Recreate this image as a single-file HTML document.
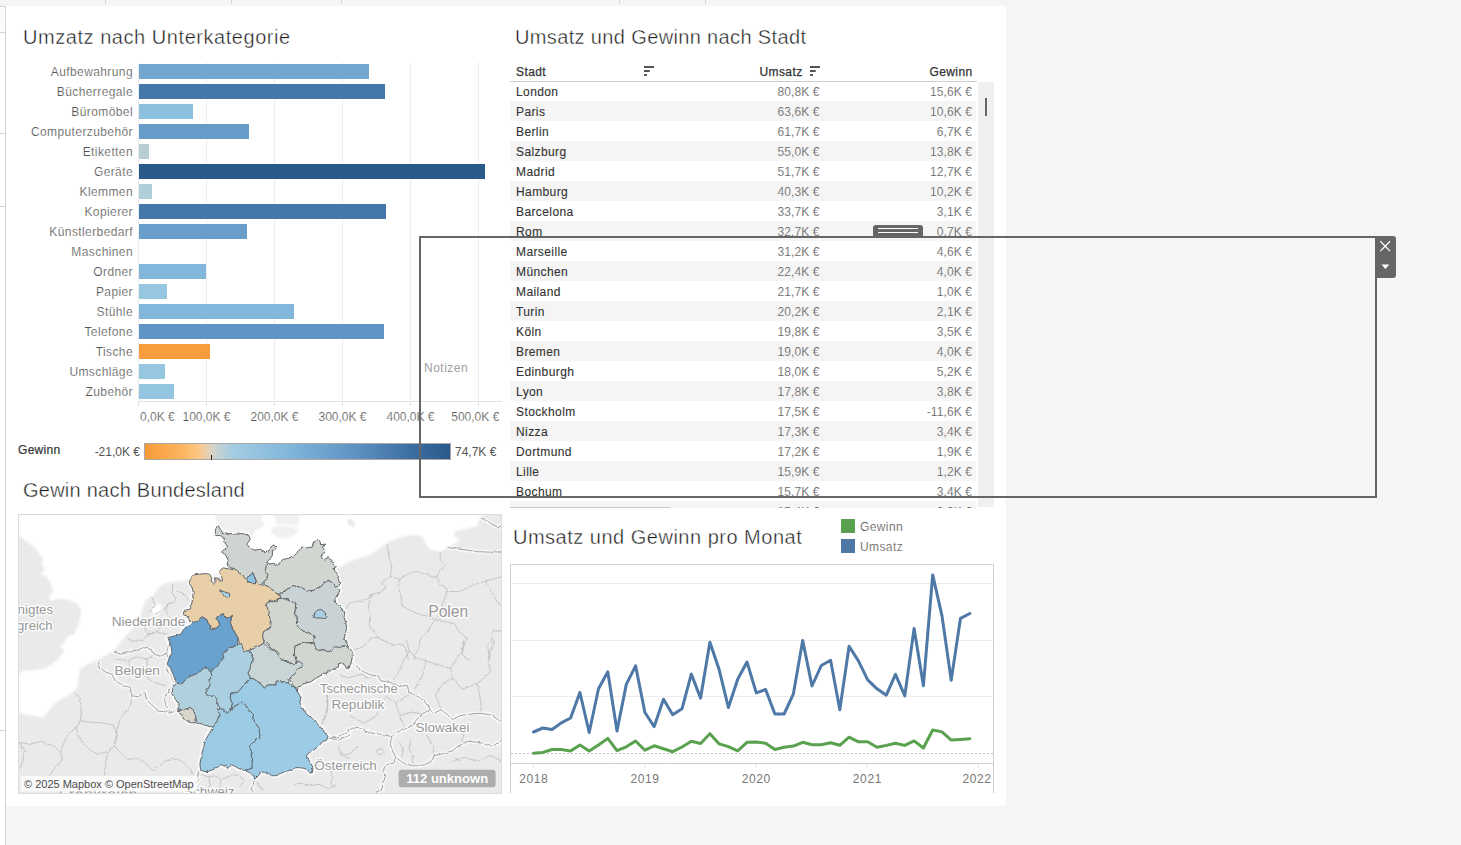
<!DOCTYPE html>
<html lang="de"><head><meta charset="utf-8"><title>Dashboard</title>
<style>
html,body{margin:0;padding:0;}
body{width:1461px;height:845px;overflow:hidden;background:#f5f5f5;position:relative;font-family:"Liberation Sans",Arial,sans-serif;}
.abs{position:absolute;}
#dash{position:absolute;left:6px;top:6px;width:1000px;height:800px;background:#fff;}
.title{position:absolute;font-size:20px;color:#1c1c1c;-webkit-text-stroke:0.4px #fff;white-space:nowrap;line-height:24px;letter-spacing:0.55px;}
.blab{position:absolute;left:0;width:133px;text-align:right;font-size:12px;color:#555;-webkit-text-stroke:0.18px #fff;line-height:20px;height:20px;white-space:nowrap;letter-spacing:0.4px;}
.bar{position:absolute;left:139px;height:15px;}
.grid{position:absolute;width:1px;background:#ededed;top:62px;height:339px;}
.axl{position:absolute;font-size:12px;color:#585858;-webkit-text-stroke:0.18px #fff;line-height:14px;top:410px;white-space:nowrap;}
.row{position:absolute;left:510px;width:466px;height:20px;}
.row.g{background:#f5f5f5;}
.c1{position:absolute;left:516px;font-size:12px;color:#333;line-height:20px;white-space:nowrap;letter-spacing:0.4px;-webkit-text-stroke:0.12px #333;}
.c2,.c3{position:absolute;font-size:12px;color:#505050;-webkit-text-stroke:0.22px #fafafa;line-height:20px;white-space:nowrap;text-align:right;width:80px;letter-spacing:0.1px;}
.c2{left:739.5px;}
.c3{left:892px;}
.hd{position:absolute;font-size:12px;color:#333;line-height:20px;white-space:nowrap;letter-spacing:0.4px;-webkit-text-stroke:0.25px #333;}
</style></head><body>

<div class="abs" style="left:0;top:7px;width:5px;height:838px;background:#fff"></div>
<div class="abs" style="left:0;top:8px;width:4px;height:23px;background:#fafafa"></div>
<div class="abs" style="left:5px;top:6px;width:1px;height:839px;background:#d4d4d4"></div>
<div class="abs" style="left:0;top:6px;width:5px;height:1px;background:#d4d4d4"></div>
<div class="abs" style="left:0;top:32px;width:5px;height:1px;background:#d4d4d4"></div>
<div class="abs" style="left:0;top:133px;width:5px;height:1px;background:#d4d4d4"></div>
<div class="abs" style="left:0;top:206px;width:5px;height:1px;background:#d4d4d4"></div>
<div class="abs" style="left:0;top:730px;width:5px;height:1px;background:#d4d4d4"></div>
<div class="abs" style="left:105px;top:0;width:1px;height:4px;background:#d4d4d4"></div>
<div class="abs" style="left:231px;top:0;width:1px;height:4px;background:#d4d4d4"></div>
<div class="abs" style="left:341px;top:0;width:1px;height:4px;background:#d4d4d4"></div>
<div class="abs" style="left:619px;top:0;width:1px;height:4px;background:#d4d4d4"></div>
<div class="abs" style="left:705px;top:0;width:1px;height:4px;background:#d4d4d4"></div>
<div id="dash"></div>
<div class="title" style="left:23px;top:25px;">Umzatz nach Unterkategorie</div>
<div class="grid" style="left:138px"></div>
<div class="grid" style="left:206px"></div>
<div class="grid" style="left:274px"></div>
<div class="grid" style="left:342px"></div>
<div class="grid" style="left:410px"></div>
<div class="grid" style="left:478px"></div>
<div class="blab" style="top:62px">Aufbewahrung</div>
<div class="bar" style="top:64px;width:230px;background:#72a6ce"></div>
<div class="blab" style="top:82px">Bücherregale</div>
<div class="bar" style="top:84px;width:246px;background:#4577a8"></div>
<div class="blab" style="top:102px">Büromöbel</div>
<div class="bar" style="top:104px;width:54px;background:#8dbfdf"></div>
<div class="blab" style="top:122px">Computerzubehör</div>
<div class="bar" style="top:124px;width:110px;background:#689cc8"></div>
<div class="blab" style="top:142px">Etiketten</div>
<div class="bar" style="top:144px;width:10px;background:#b9ced3"></div>
<div class="blab" style="top:162px">Geräte</div>
<div class="bar" style="top:164px;width:346px;background:#2a5a8a"></div>
<div class="blab" style="top:182px">Klemmen</div>
<div class="bar" style="top:184px;width:13px;background:#b0ced7"></div>
<div class="blab" style="top:202px">Kopierer</div>
<div class="bar" style="top:204px;width:247px;background:#4578a8"></div>
<div class="blab" style="top:222px">Künstlerbedarf</div>
<div class="bar" style="top:224px;width:108px;background:#6a9eca"></div>
<div class="blab" style="top:242px">Maschinen</div>
<div class="blab" style="top:262px">Ordner</div>
<div class="bar" style="top:264px;width:67px;background:#82b6da"></div>
<div class="blab" style="top:282px">Papier</div>
<div class="bar" style="top:284px;width:28px;background:#97c6e1"></div>
<div class="blab" style="top:302px">Stühle</div>
<div class="bar" style="top:304px;width:155px;background:#82b6da"></div>
<div class="blab" style="top:322px">Telefone</div>
<div class="bar" style="top:324px;width:245px;background:#6094c4"></div>
<div class="blab" style="top:342px">Tische</div>
<div class="bar" style="top:344px;width:71px;background:#f89c3c"></div>
<div class="blab" style="top:362px">Umschläge</div>
<div class="bar" style="top:364px;width:26px;background:#97c6e1"></div>
<div class="blab" style="top:382px">Zubehör</div>
<div class="bar" style="top:384px;width:35px;background:#93c4e0"></div>
<div class="abs" style="left:138px;top:401px;width:364px;height:1px;background:#e3e3e3"></div>
<div class="abs" style="left:138px;top:401px;width:1px;height:5px;background:#e3e3e3"></div>
<div class="abs" style="left:206px;top:401px;width:1px;height:5px;background:#e3e3e3"></div>
<div class="abs" style="left:274px;top:401px;width:1px;height:5px;background:#e3e3e3"></div>
<div class="abs" style="left:342px;top:401px;width:1px;height:5px;background:#e3e3e3"></div>
<div class="abs" style="left:410px;top:401px;width:1px;height:5px;background:#e3e3e3"></div>
<div class="abs" style="left:478px;top:401px;width:1px;height:5px;background:#e3e3e3"></div>
<div class="axl" style="left:140px">0,0K €</div>
<div class="axl" style="left:166.5px;width:80px;text-align:center">100,0K €</div>
<div class="axl" style="left:234.5px;width:80px;text-align:center">200,0K €</div>
<div class="axl" style="left:302.5px;width:80px;text-align:center">300,0K €</div>
<div class="axl" style="left:370.5px;width:80px;text-align:center">400,0K €</div>
<div class="axl" style="left:435.3px;width:80px;text-align:center">500,0K €</div>
<div class="abs" style="left:18px;top:442px;font-size:12px;line-height:16px;color:#333;letter-spacing:0.3px;-webkit-text-stroke:0.2px #333">Gewinn</div>
<div class="abs" style="left:60px;top:444px;width:80px;text-align:right;font-size:12px;line-height:16px;color:#555;white-space:nowrap">-21,0K €</div>
<div class="abs" style="left:455px;top:444px;font-size:12px;line-height:16px;color:#555;white-space:nowrap">74,7K €</div>
<div class="abs" style="left:144px;top:443px;width:305px;height:15px;border:1px solid #a8a8a8;background:linear-gradient(to right,#f89a38 0%,#fbb55f 12%,#fdc57f 17%,#e3d1b8 21%,#c4d2d4 24%,#a3cce3 29%,#86b9dc 45%,#6497c6 66%,#3f70a2 86%,#2a5a8a 100%)"></div>
<div class="abs" style="left:211px;top:455px;width:1px;height:5px;background:#222"></div>
<div class="title" style="left:515px;top:25px;letter-spacing:0.36px">Umsatz und Gewinn nach Stadt</div>
<div class="abs" style="left:0;top:0;width:1006px;height:508px;overflow:hidden">
<div class="c1" style="top:82px">London</div><div class="c2" style="top:82px">80,8K €</div><div class="c3" style="top:82px">15,6K €</div>
<div class="row g" style="top:101px"></div>
<div class="c1" style="top:102px">Paris</div><div class="c2" style="top:102px">63,6K €</div><div class="c3" style="top:102px">10,6K €</div>
<div class="c1" style="top:122px">Berlin</div><div class="c2" style="top:122px">61,7K €</div><div class="c3" style="top:122px">6,7K €</div>
<div class="row g" style="top:141px"></div>
<div class="c1" style="top:142px">Salzburg</div><div class="c2" style="top:142px">55,0K €</div><div class="c3" style="top:142px">13,8K €</div>
<div class="c1" style="top:162px">Madrid</div><div class="c2" style="top:162px">51,7K €</div><div class="c3" style="top:162px">12,7K €</div>
<div class="row g" style="top:181px"></div>
<div class="c1" style="top:182px">Hamburg</div><div class="c2" style="top:182px">40,3K €</div><div class="c3" style="top:182px">10,2K €</div>
<div class="c1" style="top:202px">Barcelona</div><div class="c2" style="top:202px">33,7K €</div><div class="c3" style="top:202px">3,1K €</div>
<div class="row g" style="top:221px"></div>
<div class="c1" style="top:222px">Rom</div><div class="c2" style="top:222px">32,7K €</div><div class="c3" style="top:222px">0,7K €</div>
<div class="c1" style="top:242px">Marseille</div><div class="c2" style="top:242px">31,2K €</div><div class="c3" style="top:242px">4,6K €</div>
<div class="row g" style="top:261px"></div>
<div class="c1" style="top:262px">München</div><div class="c2" style="top:262px">22,4K €</div><div class="c3" style="top:262px">4,0K €</div>
<div class="c1" style="top:282px">Mailand</div><div class="c2" style="top:282px">21,7K €</div><div class="c3" style="top:282px">1,0K €</div>
<div class="row g" style="top:301px"></div>
<div class="c1" style="top:302px">Turin</div><div class="c2" style="top:302px">20,2K €</div><div class="c3" style="top:302px">2,1K €</div>
<div class="c1" style="top:322px">Köln</div><div class="c2" style="top:322px">19,8K €</div><div class="c3" style="top:322px">3,5K €</div>
<div class="row g" style="top:341px"></div>
<div class="c1" style="top:342px">Bremen</div><div class="c2" style="top:342px">19,0K €</div><div class="c3" style="top:342px">4,0K €</div>
<div class="c1" style="top:362px">Edinburgh</div><div class="c2" style="top:362px">18,0K €</div><div class="c3" style="top:362px">5,2K €</div>
<div class="row g" style="top:381px"></div>
<div class="c1" style="top:382px">Lyon</div><div class="c2" style="top:382px">17,8K €</div><div class="c3" style="top:382px">3,8K €</div>
<div class="c1" style="top:402px">Stockholm</div><div class="c2" style="top:402px">17,5K €</div><div class="c3" style="top:402px">-11,6K €</div>
<div class="row g" style="top:421px"></div>
<div class="c1" style="top:422px">Nizza</div><div class="c2" style="top:422px">17,3K €</div><div class="c3" style="top:422px">3,4K €</div>
<div class="c1" style="top:442px">Dortmund</div><div class="c2" style="top:442px">17,2K €</div><div class="c3" style="top:442px">1,9K €</div>
<div class="row g" style="top:461px"></div>
<div class="c1" style="top:462px">Lille</div><div class="c2" style="top:462px">15,9K €</div><div class="c3" style="top:462px">1,2K €</div>
<div class="c1" style="top:482px">Bochum</div><div class="c2" style="top:482px">15,7K €</div><div class="c3" style="top:482px">3,4K €</div>
<div class="row g" style="top:501px"></div>
<div class="c1" style="top:502px">Helsinki</div><div class="c2" style="top:502px">15,4K €</div><div class="c3" style="top:502px">2,3K €</div>
</div>
<div class="hd" style="left:516px;top:62px">Stadt</div>
<div class="hd" style="left:759.5px;top:62px">Umsatz</div>
<div class="hd" style="left:929.5px;top:62px">Gewinn</div>
<div class="abs" style="left:510px;top:81px;width:467px;height:1px;background:#cfcfcf"></div>
<svg class="abs" style="left:643.5px;top:66px" width="10.5" height="10" viewBox="0 0 11 10" preserveAspectRatio="none"><rect x="0" y="0" width="11" height="2" fill="#555"/><rect x="0" y="4" width="6" height="2" fill="#555"/><rect x="0" y="8" width="3" height="2" fill="#555"/></svg>
<svg class="abs" style="left:809.5px;top:66px" width="10.5" height="10" viewBox="0 0 11 10" preserveAspectRatio="none"><rect x="0" y="0" width="11" height="2" fill="#555"/><rect x="0" y="4" width="6" height="2" fill="#555"/><rect x="0" y="8" width="3" height="2" fill="#555"/></svg>
<div class="abs" style="left:978px;top:82px;width:16px;height:425px;background:#f0f0f0"></div>
<div class="abs" style="left:985px;top:98px;width:2px;height:18px;background:#666"></div>
<div class="abs" style="left:510px;top:507px;width:160px;height:1px;background:#c9c9c9"></div>
<div class="title" style="left:23px;top:478px;letter-spacing:0.24px">Gewin nach Bundesland</div>
<svg class="abs" style="left:18px;top:514px" width="484" height="280" viewBox="18 514 484 280">
<defs><filter id="soft" x="-5%" y="-5%" width="110%" height="110%"><feGaussianBlur stdDeviation="1.2"/></filter><filter id="jag" x="-2%" y="-2%" width="104%" height="104%"><feTurbulence type="fractalNoise" baseFrequency="0.22" numOctaves="2" seed="7" result="n"/><feDisplacementMap in="SourceGraphic" in2="n" scale="3" xChannelSelector="R" yChannelSelector="G"/></filter><clipPath id="mc"><rect x="18" y="514" width="484" height="280"/></clipPath></defs>
<g clip-path="url(#mc)">
<rect x="18" y="514" width="484" height="280" fill="#eaeaea"/>
<g filter="url(#soft)" fill="#fff">
<polygon points="18.5,514.4 18.5,534.8 25.6,541.1 34.5,547.3 39.8,554.4 43.4,559.7 41.6,563.2 45.2,570.3 39.8,573.0 46.9,577.4 51.4,584.5 53.2,591.6 48.7,597.0 50.5,600.5 57.6,598.7 68.2,599.6 77.1,603.2 81.5,611.2 79.8,620.0 78.0,627.1 73.6,634.2 66.5,637.8 64.7,642.2 66.1,640.0 60.5,646.6 64.2,651.4 56.7,660.8 45.3,668.4 33.9,670.3 22.6,671.2 18.8,674.1 18.8,704.4 19.7,712.0 24.5,714.8 33.9,715.8 43.4,717.7 48.1,712.0 52.9,704.4 62.3,698.7 71.8,693.0 77.5,687.3 78.4,677.9 80.3,668.4 88.9,663.7 98.3,659.9 107.8,654.2 117.3,647.6 121.1,640.0 121.5,641.3 126.8,634.2 132.1,628.9 137.4,623.6 140.1,616.5 141.9,609.4 144.5,602.3 148.1,598.7 153.4,595.2 157.0,589.9 162.3,584.5 169.4,581.9 189.8,580.1 215,575 225,570 230,560 222,545 218,530 220,514.5"/>
<polygon points="262,514.5 250.4,539.2 246.8,544.1 249.0,547.0 253.2,548.4 254.7,550.5 259.6,549.1 265.3,551.9 269.6,550.5 271.0,547.0 273.8,544.8 276.7,547.7 274.5,549.8 272.4,550.5 272.4,555.5 269.6,559.0 266.7,562.6 269.6,564.0 273.8,563.3 277.4,565.4 282.3,559.8 288.0,558.3 293.7,556.2 298.0,551.9 301.5,547.0 307.9,547.7 312.2,547.0 313.6,542.7 317.8,539.2 320.0,541.3 320.7,544.8 324.9,544.1 323.5,547.7 325.6,551.9 322.1,554.1 320.7,557.6 324.9,559.0 328.5,557.6 332.7,562.6 336.3,566.8 338.2,568.6 346.1,563.2 358.6,557.9 371.0,554.4 379.9,548.2 387.0,542.8 395.8,538.4 406.5,535.7 415.4,534.8 422.5,536.6 426.0,544.6 431.3,549.9 440.2,551.7 445.5,548.2 452.6,544.6 459.7,541.1 454.4,536.6 454.4,531.3 463.3,529.5 470.4,527.7 477.5,526.0 479.3,518.0 484.6,514.4"/>
<polygon points="153,607 158,603 162,606 161,612 156,617 151,614"/>
</g>
<g filter="url(#soft)" fill="#f0f0f0"><polygon points="214.9,514.3 217.7,525.0 222.0,532.1 235.5,534.2 248.3,534.9 253.9,528.5 256.8,514.3"/><polygon points="271.0,528.5 279.5,525.7 290.9,527.1 299.4,529.9 293.7,535.6 285.2,538.5 276.7,537.0 271.0,532.8"/><polygon points="242.6,514.3 259.6,514.3 263.9,525.7 256.8,529.9 246.8,527.1"/><polygon points="273.8,514.3 299.4,514.3 298.0,525.7 285.2,524.3 276.7,524.3"/></g>
<g fill="#ececec"><polygon points="347.0,519.8 351.5,518.9 355.0,523.3 354.1,527.7 347.9,525.1"/></g>
<g filter="url(#jag)">
<g fill="none" stroke="#b4b4b4" stroke-width="0.7" stroke-linejoin="round"><polyline points="74.7,693.0 80.3,698.7 81.3,712.0 80.3,721.4 76.6,727.1 77.5,734.7 83.2,744.2 90.8,750.8 98.3,753.6 107.8,751.7 114.4,746.1 117.3,734.7 113.5,725.2 105.9,723.3 94.5,722.4 81.3,721.4"/><polyline points="132.4,698.7 128.6,710.1 121.1,715.8 117.3,729.0 114.4,746.1"/><polyline points="114.4,746.1 121.1,753.6 126.7,759.3 138.1,758.4 145.7,763.1 153.3,770.7 164.6,761.2 172.2,758.4 181.7,761.2 189.2,768.8 194.9,775.4"/><polyline points="107.8,751.7 105.9,763.1 104.0,776.4"/><polyline points="18.8,742.3 30.2,744.2 41.5,741.3 52.9,746.1 60.5,751.7 64.2,742.3 68.0,734.7 76.6,727.1"/><polyline points="60.5,751.7 62.3,759.3 52.9,770.7 49.1,776.4"/><polyline points="18.8,742.3 24.5,749.8 22.6,761.2 19.7,768.8"/><polyline points="115.4,658.9 128.6,660.8 136.2,657.0 147.6,658.9 153.3,655.2"/><polyline points="128.6,660.8 132.4,670.3 145.7,676.0 155.2,683.6 166.5,685.5"/><polyline points="145.7,676.0 147.6,658.9"/><polyline points="172.9,583.6 172.1,593.4 176.5,597.0 173.8,602.3 167.6,604.1 165.8,611.2 169.4,616.5"/><polyline points="176.5,591.6 185.4,595.2 190.7,602.3"/><polyline points="151.6,597.0 155.2,605.8 149.9,611.2 153.4,614.7 164.1,609.4 167.6,604.1"/><polyline points="144.5,627.1 146.3,632.4 157.0,632.4 160.5,627.1"/><polyline points="126.8,637.8 132.1,641.3 142.8,639.5 149.9,634.2 157.0,632.4"/><polyline points="157.0,632.4 167.6,634.2 169.4,641.3"/><polyline points="387.0,542.8 388.7,554.4 391.4,565.0 390.5,576.6 385.2,580.1 381.6,582.8 386.1,587.2 379.9,592.5 371.9,594.3 367.4,598.7 358.6,601.4 349.7,603.2 345.3,609.4"/><polyline points="390.5,576.6 399.4,579.2 406.5,574.8 415.4,571.2 424.2,573.9 431.3,576.6 436.7,577.4 440.2,570.3 445.5,565.0 440.2,559.7 440.2,551.7"/><polyline points="399.4,579.2 398.5,588.1 401.2,597.0 402.1,605.8 410.0,610.3 420.7,614.7 427.8,616.5 434.9,620.0"/><polyline points="436.7,577.4 440.2,584.5 447.3,588.1 445.5,597.0 442.0,604.1 443.8,611.2 438.4,616.5 434.9,620.0"/><polyline points="447.3,591.6 459.7,591.6 470.4,586.3 479.3,582.8 486.4,581.0 495.2,578.3 501.8,576.6"/><polyline points="486.4,581.0 489.9,589.9 495.2,598.7 500.6,605.8"/><polyline points="371.9,594.3 368.3,605.8 370.1,614.7 369.2,625.4 374.5,632.5 378.1,637.8 385.2,641.3 394.1,644.9 402.9,644.0 406.5,650.2 408.3,660.0"/><polyline points="434.9,620.0 431.3,625.4 426.9,632.5 420.7,637.8 418.9,648.4 415.4,653.8 413.6,660.0"/><polyline points="434.9,620.0 445.5,621.8 454.4,623.6 459.7,632.5 466.8,637.8 463.3,646.7 462.4,655.5 468.6,660.0"/><polyline points="378.1,637.8 371.0,637.8 365.7,644.9 358.6,648.4 353.2,650.2"/><polyline points="501.8,630.7 493.5,630.7 491.7,641.3 487.3,644.9 489.9,660.0"/><polyline points="407.1,640.0 409.0,651.4 403.3,660.8 397.6,674.1 391.0,682.6"/><polyline points="409.0,651.4 416.6,658.0 426.0,660.8 422.3,676.0 414.7,689.2"/><polyline points="426.0,660.8 437.4,664.6 450.7,668.4 456.3,658.9 462.0,651.4 463.9,640.0"/><polyline points="450.7,668.4 452.6,677.9 443.1,683.6 435.5,694.9 439.3,704.4 441.2,709.7"/><polyline points="452.6,677.9 462.0,689.2 477.2,683.6 490.4,672.2 488.5,657.0 494.2,640.0"/><polyline points="477.2,683.6 481.0,702.5 481.0,713.5"/><polyline points="338.9,674.1 348.4,677.9 361.7,674.1 367.3,677.9 376.8,676.0"/><polyline points="327.6,694.9 327.6,710.1 323.8,721.4"/><polyline points="350.3,715.7 363.6,723.3 376.8,715.7 380.6,704.4 386.3,696.8"/><polyline points="386.3,696.8 395.7,702.5 399.5,715.7 405.2,729.0"/><polyline points="395.7,702.5 409.0,694.9"/><polyline points="399.5,715.7 410.9,712.0 422.3,713.8"/><polyline points="426.0,734.7 433.6,746.0 433.6,755.9"/><polyline points="456.3,725.2 463.9,734.7 460.1,746.0"/><polyline points="338.9,746.0 340.8,755.5 350.3,753.6 357.9,746.0"/><polyline points="376.8,751.7 378.7,748.9 382.5,748.9 384.0,751.7 381.5,754.6 378.3,754.2 376.8,751.7"/><polyline points="399.5,742.3 403.3,749.8 401.4,757.4"/><polyline points="410.9,738.5 409.0,747.9 412.8,757.4 412.8,765.9"/><polyline points="452.6,761.2 463.9,757.4 477.2,761.2 490.4,755.5 502.7,761.2"/><polyline points="197.5,775.7 202.4,774.5 208.6,777.0 214.8,775.7 221.1,779.4 227.3,777.0 232.2,774.5 239.7,775.7 243.4,780.7 239.7,786.9"/><polyline points="208.6,777.0 209.9,784.4 207.4,791.9"/><polyline points="221.1,779.4 219.8,786.9 222.3,793.1"/><polyline points="254.6,779.4 259.6,786.9 264.5,790.6"/><polyline points="293.1,784.4 301.8,783.2 309.3,785.7 319.2,784.4 326.6,788.1 336.6,785.7"/><polyline points="330.4,769.5 332.9,777.0 330.4,784.4"/><polyline points="341.6,752.1 345.3,757.1 350.0,758.3"/><polyline points="326.6,695.0 327.9,702.4 326.6,709.9 324.2,718.6 320.4,726.0"/></g>
<g fill="none" stroke="#fff" stroke-opacity="0.55" stroke-width="4.5" stroke-linejoin="round" stroke-linecap="round"><polyline points="98.3,659.9 99.3,668.4 105.9,672.2 111.6,674.1 115.4,680.7 123.0,685.5 130.5,687.3 131.5,695.9 138.1,696.8 144.7,692.1 146.6,699.7 151.4,704.4 158.9,711.0 166.5,712.0 172.2,712.3"/><polyline points="114.4,652.3 121.1,654.2 128.6,652.3 136.2,650.4 143.8,647.6 151.4,649.5 154.2,654.2 160.8,656.1 166.5,653.3 168.4,645.7"/><polyline points="164.6,696.8 165.6,705.3 172.2,712.3 176.9,711.0 177.9,702.5 173.1,695.9 168.4,691.1 164.6,696.8"/><polyline points="166.5,653.3 169.4,660.8 166.5,670.3 171.2,676.0 174.1,683.6 168.4,691.1"/><polyline points="447.3,547.6 459.7,549.0 477.5,551.7 491.7,552.2 502.3,551.7"/><polyline points="481.0,518.0 488.1,521.5 495.2,526.0 502.3,526.9"/><polyline points="352.2,662.7 357.9,667.5 364.5,672.2 371.1,675.0 378.7,676.0 380.6,680.7 391.0,682.6 399.5,686.4 407.1,685.4 409.0,692.1 416.6,695.9 424.1,700.6 429.8,709.1 434.6,712.9 441.2,709.7 448.8,715.7 452.6,719.5 460.1,715.7 471.5,713.8 481.0,713.5 490.4,714.8 498.0,719.5 502.7,723.3"/><polyline points="429.8,709.7 422.3,713.8 416.6,719.5 412.8,725.2 405.2,729.0 395.7,732.8 392.0,736.6"/><polyline points="322.8,736.6 327.6,738.5 337.0,737.0 346.5,732.8 352.2,728.1 361.7,729.0 369.2,732.8 380.6,734.1 392.0,736.6"/><polyline points="392.0,736.6 390.1,744.1 392.9,751.7 395.7,757.4 403.3,763.1 412.8,765.9 424.1,765.0 431.7,761.2 433.6,755.9 443.1,753.6 452.6,750.8 458.2,746.0 467.7,741.3 479.1,742.3 490.4,746.0 498.0,744.1 502.7,738.5"/><polyline points="395.7,757.4 393.8,763.1 386.3,765.0 382.5,770.7 386.3,775.4 382.5,782.0 382.5,789.6 374.9,792.4"/><polyline points="327.9,736.6 332.9,739.1 339.1,739.7 345.3,737.2 350.2,734.7"/><polyline points="254.6,778.8 253.4,784.4 250.9,789.4 254.6,793.1"/><polyline points="199.9,769.5 197.5,774.5 198.7,779.4 195.0,784.4"/></g>
<g fill="none" stroke="#9a9a9a" stroke-width="0.9" stroke-linejoin="round"><polyline points="98.3,659.9 99.3,668.4 105.9,672.2 111.6,674.1 115.4,680.7 123.0,685.5 130.5,687.3 131.5,695.9 138.1,696.8 144.7,692.1 146.6,699.7 151.4,704.4 158.9,711.0 166.5,712.0 172.2,712.3"/><polyline points="114.4,652.3 121.1,654.2 128.6,652.3 136.2,650.4 143.8,647.6 151.4,649.5 154.2,654.2 160.8,656.1 166.5,653.3 168.4,645.7"/><polyline points="164.6,696.8 165.6,705.3 172.2,712.3 176.9,711.0 177.9,702.5 173.1,695.9 168.4,691.1 164.6,696.8"/><polyline points="166.5,653.3 169.4,660.8 166.5,670.3 171.2,676.0 174.1,683.6 168.4,691.1"/><polyline points="447.3,547.6 459.7,549.0 477.5,551.7 491.7,552.2 502.3,551.7"/><polyline points="481.0,518.0 488.1,521.5 495.2,526.0 502.3,526.9"/><polyline points="352.2,662.7 357.9,667.5 364.5,672.2 371.1,675.0 378.7,676.0 380.6,680.7 391.0,682.6 399.5,686.4 407.1,685.4 409.0,692.1 416.6,695.9 424.1,700.6 429.8,709.1 434.6,712.9 441.2,709.7 448.8,715.7 452.6,719.5 460.1,715.7 471.5,713.8 481.0,713.5 490.4,714.8 498.0,719.5 502.7,723.3"/><polyline points="429.8,709.7 422.3,713.8 416.6,719.5 412.8,725.2 405.2,729.0 395.7,732.8 392.0,736.6"/><polyline points="322.8,736.6 327.6,738.5 337.0,737.0 346.5,732.8 352.2,728.1 361.7,729.0 369.2,732.8 380.6,734.1 392.0,736.6"/><polyline points="392.0,736.6 390.1,744.1 392.9,751.7 395.7,757.4 403.3,763.1 412.8,765.9 424.1,765.0 431.7,761.2 433.6,755.9 443.1,753.6 452.6,750.8 458.2,746.0 467.7,741.3 479.1,742.3 490.4,746.0 498.0,744.1 502.7,738.5"/><polyline points="395.7,757.4 393.8,763.1 386.3,765.0 382.5,770.7 386.3,775.4 382.5,782.0 382.5,789.6 374.9,792.4"/><polyline points="327.9,736.6 332.9,739.1 339.1,739.7 345.3,737.2 350.2,734.7"/><polyline points="254.6,778.8 253.4,784.4 250.9,789.4 254.6,793.1"/><polyline points="199.9,769.5 197.5,774.5 198.7,779.4 195.0,784.4"/></g>
</g>
<g filter="url(#jag)">
<g fill="none" stroke="#fff" stroke-opacity="0.6" stroke-width="5" stroke-linejoin="round"><polygon points="217.7,525.0 219.9,528.5 222.0,532.1 228.4,533.5 235.5,534.2 241.2,533.5 248.3,534.9 250.4,539.2 246.8,544.1 249.0,547.0 253.2,548.4 254.7,550.5 259.6,549.1 265.3,551.9 269.6,550.5 271.0,547.0 273.8,544.8 276.7,547.7 274.5,549.8 272.4,550.5 272.4,555.5 269.6,559.0 266.7,562.6 269.6,564.0 266.0,566.8 265.3,571.1 268.1,574.7 266.0,579.6 262.5,583.2 261.0,584.6 256.1,581.8 254.7,578.2 253.2,573.2 249.0,576.1 245.4,578.9 241.2,574.7 236.9,570.4 233.4,568.3 229.8,567.6 227.0,564.0 228.4,560.5 225.6,554.8 221.3,551.9 224.8,549.1 227.7,547.0 224.1,541.3 221.3,535.6 214.9,535.6 215.6,529.9"/><polygon points="245.4,578.9 249.0,576.1 253.2,573.2 254.7,578.2 256.1,581.8 254.7,583.9 250.4,582.5 247.6,581.8"/><polygon points="266.7,562.6 269.6,564.0 273.8,563.3 277.4,565.4 282.3,559.8 288.0,558.3 293.7,556.2 298.0,551.9 301.5,547.0 307.9,547.7 312.2,547.0 313.6,542.7 317.8,539.2 320.0,541.3 320.7,544.8 324.9,544.1 323.5,547.7 325.6,551.9 322.1,554.1 320.7,557.6 324.9,559.0 328.5,557.6 332.7,562.6 336.3,566.8 332.7,569.0 336.3,572.5 337.7,576.8 339.8,583.9 338.4,587.4 334.9,586.7 332.0,582.5 328.5,580.3 324.9,582.5 320.7,586.7 313.6,590.3 307.9,591.0 302.2,588.1 296.5,586.0 292.3,586.7 286.6,589.6 282.3,592.4 279.5,593.8 276.7,593.8 273.8,591.0 269.6,587.4 265.3,585.3 262.5,583.2 266.0,579.6 268.1,574.7 265.3,571.1 266.0,566.8"/><polygon points="279.5,593.8 282.3,592.4 286.6,589.6 292.3,586.7 296.5,586.0 302.2,588.1 307.9,591.0 313.6,590.3 320.7,586.7 324.9,582.5 328.5,580.3 332.0,582.5 334.9,586.7 338.4,587.4 339.8,591.0 336.3,596.7 338.1,595.2 334.8,599.8 336.8,604.3 341.3,608.2 344.6,612.1 344.0,617.3 345.9,622.5 346.6,628.4 345.3,634.3 344.0,638.2 346.6,643.4 348.5,647.3 344.6,646.0 339.4,646.6 334.8,647.3 331.6,650.5 327.7,651.8 323.1,649.9 318.6,650.5 315.3,648.6 314.0,642.7 314.0,636.9 312.1,634.3 307.5,632.3 303.0,631.0 298.4,628.4 296.4,624.5 297.1,618.0 294.5,614.1 295.1,609.5 295.8,603.7 292.5,601.7 288.0,600.4 284.1,597.8 280.8,598.5"/><polygon points="313.4,617.3 314.7,612.8 317.3,610.2 321.8,609.5 325.1,612.8 327.0,616.0 325.7,618.6 321.2,618.0 316.6,618.0"/><polygon points="190.5,578.5 193.4,574.9 199.8,574.2 205.4,573.5 209.7,574.2 211.8,578.5 211.1,581.3 213.9,583.4 216.1,581.3 215.4,577.7 218.2,578.5 219.6,581.3 222.5,580.6 221.8,577.0 219.6,574.2 220.3,569.9 223.2,567.8 229.6,569.2 233.8,568.5 237.4,570.6 241.6,574.9 245.9,579.2 248.0,582.0 251.6,582.7 255.1,584.1 256.5,582.0 261.5,584.8 265.8,585.6 270.0,587.7 274.3,591.2 277.1,594.1 280.7,596.2 279.3,599.0 275.0,600.5 270.0,601.2 266.5,604.0 268.6,610.4 270.7,615.4 270.0,622.5 270.7,627.4 267.2,629.6 263.6,631.7 262.9,637.4 264.3,643.0 259.4,645.9 253.7,648.7 247.3,650.9 243.8,651.6 242.3,647.3 239.5,643.8 238.1,638.1 235.2,633.1 232.4,628.1 230.3,622.5 232.4,615.4 228.9,618.2 226.0,617.5 223.2,613.9 218.9,615.4 216.1,618.2 218.9,621.8 219.6,625.3 216.1,628.1 209.7,628.9 211.1,626.0 208.3,623.9 206.8,619.6 202.6,616.8 198.3,620.3 193.4,622.5 189.8,621.0 187.0,616.1 183.4,614.7 184.1,610.4 190.5,609.0 191.9,602.6 193.4,592.7 191.9,587.0 189.1,583.4"/><polygon points="219.6,589.8 224.6,591.9 229.6,593.4 229.6,596.9 226.0,596.9 222.5,594.1"/><polygon points="167.8,637.4 174.2,636.0 181.3,633.8 183.4,629.6 188.4,625.3 193.4,622.5 198.3,620.3 201.9,616.8 206.8,619.6 208.3,623.9 211.1,626.0 209.7,628.9 216.1,628.1 219.6,625.3 218.9,621.8 216.1,618.2 218.9,615.4 223.2,613.9 226.0,617.5 228.9,618.2 232.4,615.4 230.3,622.5 232.4,628.1 235.2,633.1 238.1,638.1 237.4,644.2 233.8,647.0 229.6,647.7 226.7,651.3 222.5,653.4 223.9,657.7 221.0,661.2 217.5,666.2 213.2,669.0 211.1,672.6 209.0,670.5 205.4,666.9 201.2,670.5 196.2,674.0 190.5,676.1 185.6,679.7 182.0,683.9 176.3,683.2 173.5,675.4 170.6,668.3 167.1,664.1 169.2,658.4 172.1,652.7 170.6,644.2 167.8,637.8"/><polygon points="176.3,683.2 182.0,683.9 185.6,679.7 190.5,676.1 196.2,674.0 201.2,670.5 205.4,666.9 209.0,670.5 211.1,672.6 211.8,676.1 209.0,679.7 210.4,684.7 207.6,689.6 205.4,693.9 209.0,696.0 214.7,696.0 216.8,700.3 218.2,705.2 217.5,709.5 219.6,713.0 218.2,718.0 217.5,723.0 214.7,727.2 209.7,726.5 202.6,724.4 196.9,722.3 195.5,716.6 193.4,710.2 189.8,707.4 184.8,709.5 177.7,710.2 179.2,704.5 175.6,699.6 172.1,693.9 172.8,688.2"/><polygon points="177.7,710.9 184.8,709.5 189.8,707.4 193.4,710.2 195.5,716.6 196.2,722.3 191.9,723.0 187.7,721.6 183.4,718.0 180.6,713.8"/><polygon points="211.1,672.6 213.2,669.0 217.5,666.2 221.0,661.2 223.9,657.7 222.5,653.4 226.7,651.3 229.6,647.7 233.8,647.0 237.4,644.2 241.6,643.5 243.0,648.5 243.8,652.0 248.7,650.6 251.6,654.8 253.7,658.4 250.9,664.1 250.1,669.0 248.0,673.3 250.9,678.3 247.3,681.8 243.8,684.7 240.9,688.9 237.4,692.5 231.0,693.2 230.3,698.1 232.4,703.8 231.0,708.8 228.9,713.0 226.7,714.5 223.9,710.9 220.3,708.8 218.2,705.2 216.8,700.3 214.7,696.0 209.0,696.0 205.4,693.9 207.6,689.6 210.4,684.7 209.0,679.7 211.8,676.1"/><polygon points="248.7,650.6 253.7,648.5 259.4,645.6 263.6,643.5 267.9,646.3 271.4,649.9 276.4,652.0 279.3,657.0 283.5,660.5 288.5,662.7 294.9,664.8 297.0,661.2 299.8,660.5 303.4,664.8 299.8,669.0 297.0,672.6 293.4,676.1 289.2,679.0 288.5,683.2 283.5,682.5 279.3,680.4 276.4,681.1 275.7,685.4 272.2,684.7 267.2,685.4 264.3,688.2 261.5,684.7 258.0,681.8 253.7,679.0 250.9,678.3 248.0,673.3 250.1,669.0 250.9,664.1 253.7,658.4 251.6,654.8"/><polygon points="265.9,603.7 270.4,601.7 276.9,601.7 280.8,598.5 284.1,597.8 288.0,600.4 292.5,601.7 295.8,603.7 295.1,609.5 294.5,614.1 297.1,618.0 296.4,624.5 298.4,628.4 303.0,631.0 307.5,632.3 312.1,634.3 314.0,636.9 314.0,642.7 306.9,642.7 300.3,644.0 295.1,646.0 294.5,649.9 294.5,655.1 296.4,660.9 295.1,664.8 290.6,662.9 286.0,660.9 281.5,659.6 278.9,656.4 279.5,652.5 275.0,650.5 271.1,648.6 268.5,644.7 265.2,642.1 262.6,637.5 263.3,631.7 267.2,629.7 270.4,628.4 271.1,622.5 269.8,618.0 269.1,612.1 267.2,607.6"/><polygon points="295.1,646.0 300.3,644.0 306.9,642.7 314.0,642.7 315.3,648.6 318.6,650.5 323.1,649.9 327.7,651.8 331.6,650.5 334.8,647.3 339.4,646.6 344.6,646.0 348.5,647.3 351.8,651.2 352.4,656.4 351.1,662.9 349.2,668.1 346.6,668.7 344.6,664.8 341.3,662.9 338.1,664.2 338.7,666.8 334.2,668.7 329.6,671.3 325.1,673.3 319.9,675.9 315.3,678.5 310.8,681.8 306.2,683.1 301.7,684.4 298.4,687.6 297.1,690.2 294.5,686.3 291.2,682.4 289.3,679.2 291.9,675.9 295.8,673.3 297.1,669.4 301.7,666.8 303.0,664.2 299.7,661.6 296.4,660.9 294.5,655.1 294.5,649.9"/><polygon points="218.6,709.9 221.7,708.6 224.2,710.5 226.6,713.6 229.1,711.7 231.6,709.9 232.9,706.8 236.6,704.9 239.1,702.4 243.4,703.0 245.9,705.5 248.4,709.9 252.1,713.0 253.4,718.6 255.8,723.5 258.9,727.9 259.6,733.5 260.2,737.2 256.5,737.8 255.2,741.6 252.1,743.4 249.6,746.5 251.5,751.5 252.7,757.1 252.1,763.3 252.1,768.3 248.4,769.5 243.4,770.1 238.4,768.3 234.1,765.8 231.0,764.5 228.5,767.6 224.8,766.4 221.1,764.5 218.0,767.0 213.0,769.5 208.6,771.4 203.7,771.4 200.6,769.5 199.9,764.5 201.2,757.1 203.0,749.6 205.5,739.7 209.3,733.5 213.0,727.3 216.7,722.3 219.2,714.8"/><polygon points="231.0,708.8 232.4,703.8 230.3,698.1 231.0,693.2 237.4,692.5 240.9,688.9 243.8,684.7 247.3,681.8 250.9,678.3 253.7,679.0 258.0,681.8 261.5,684.7 264.3,688.2 267.2,685.4 272.2,684.7 275.7,685.4 276.4,681.1 279.3,680.4 283.5,682.5 288.5,683.2 293.4,686.1 296.3,689.6 298.1,692.5 300.6,697.5 299.9,703.0 303.0,708.6 306.1,713.6 311.1,718.0 316.7,722.9 321.1,727.9 325.4,732.2 327.9,736.6 326.6,740.3 322.3,741.6 319.2,745.9 314.2,749.6 309.3,752.7 306.8,755.2 308.6,759.6 311.1,763.9 313.0,767.6 312.4,772.6 309.9,773.2 307.4,769.5 303.7,768.3 299.3,767.6 295.6,767.6 293.1,769.5 288.1,770.7 283.2,772.0 279.4,774.5 275.7,775.7 271.4,775.7 268.3,773.2 264.5,772.0 260.8,772.6 258.3,775.7 255.2,778.8 253.4,775.7 249.6,772.6 245.3,770.7 243.4,770.1 248.4,769.5 252.1,768.3 252.1,763.3 252.7,757.1 251.5,751.5 249.6,746.5 252.1,743.4 255.2,741.6 256.5,737.8 260.2,737.2 259.6,733.5 258.9,727.9 255.8,723.5 253.4,718.6 252.1,713.0 248.4,709.9 245.9,705.5 243.4,703.0 239.1,702.4 236.6,704.9 232.9,706.8 231.6,709.9"/></g>
<polygon points="217.7,525.0 219.9,528.5 222.0,532.1 228.4,533.5 235.5,534.2 241.2,533.5 248.3,534.9 250.4,539.2 246.8,544.1 249.0,547.0 253.2,548.4 254.7,550.5 259.6,549.1 265.3,551.9 269.6,550.5 271.0,547.0 273.8,544.8 276.7,547.7 274.5,549.8 272.4,550.5 272.4,555.5 269.6,559.0 266.7,562.6 269.6,564.0 266.0,566.8 265.3,571.1 268.1,574.7 266.0,579.6 262.5,583.2 261.0,584.6 256.1,581.8 254.7,578.2 253.2,573.2 249.0,576.1 245.4,578.9 241.2,574.7 236.9,570.4 233.4,568.3 229.8,567.6 227.0,564.0 228.4,560.5 225.6,554.8 221.3,551.9 224.8,549.1 227.7,547.0 224.1,541.3 221.3,535.6 214.9,535.6 215.6,529.9" fill="#d0d4d1" stroke="#62666a" stroke-width="1" stroke-linejoin="round"/>
<polygon points="245.4,578.9 249.0,576.1 253.2,573.2 254.7,578.2 256.1,581.8 254.7,583.9 250.4,582.5 247.6,581.8" fill="#8fc2e3" stroke="#62666a" stroke-width="1" stroke-linejoin="round"/>
<polygon points="266.7,562.6 269.6,564.0 273.8,563.3 277.4,565.4 282.3,559.8 288.0,558.3 293.7,556.2 298.0,551.9 301.5,547.0 307.9,547.7 312.2,547.0 313.6,542.7 317.8,539.2 320.0,541.3 320.7,544.8 324.9,544.1 323.5,547.7 325.6,551.9 322.1,554.1 320.7,557.6 324.9,559.0 328.5,557.6 332.7,562.6 336.3,566.8 332.7,569.0 336.3,572.5 337.7,576.8 339.8,583.9 338.4,587.4 334.9,586.7 332.0,582.5 328.5,580.3 324.9,582.5 320.7,586.7 313.6,590.3 307.9,591.0 302.2,588.1 296.5,586.0 292.3,586.7 286.6,589.6 282.3,592.4 279.5,593.8 276.7,593.8 273.8,591.0 269.6,587.4 265.3,585.3 262.5,583.2 266.0,579.6 268.1,574.7 265.3,571.1 266.0,566.8" fill="#d2d6d1" stroke="#62666a" stroke-width="1" stroke-linejoin="round"/>
<polygon points="279.5,593.8 282.3,592.4 286.6,589.6 292.3,586.7 296.5,586.0 302.2,588.1 307.9,591.0 313.6,590.3 320.7,586.7 324.9,582.5 328.5,580.3 332.0,582.5 334.9,586.7 338.4,587.4 339.8,591.0 336.3,596.7 338.1,595.2 334.8,599.8 336.8,604.3 341.3,608.2 344.6,612.1 344.0,617.3 345.9,622.5 346.6,628.4 345.3,634.3 344.0,638.2 346.6,643.4 348.5,647.3 344.6,646.0 339.4,646.6 334.8,647.3 331.6,650.5 327.7,651.8 323.1,649.9 318.6,650.5 315.3,648.6 314.0,642.7 314.0,636.9 312.1,634.3 307.5,632.3 303.0,631.0 298.4,628.4 296.4,624.5 297.1,618.0 294.5,614.1 295.1,609.5 295.8,603.7 292.5,601.7 288.0,600.4 284.1,597.8 280.8,598.5" fill="#c9d3d5" stroke="#62666a" stroke-width="1" stroke-linejoin="round"/>
<polygon points="313.4,617.3 314.7,612.8 317.3,610.2 321.8,609.5 325.1,612.8 327.0,616.0 325.7,618.6 321.2,618.0 316.6,618.0" fill="#a9cfe4" stroke="#62666a" stroke-width="1" stroke-linejoin="round"/>
<polygon points="190.5,578.5 193.4,574.9 199.8,574.2 205.4,573.5 209.7,574.2 211.8,578.5 211.1,581.3 213.9,583.4 216.1,581.3 215.4,577.7 218.2,578.5 219.6,581.3 222.5,580.6 221.8,577.0 219.6,574.2 220.3,569.9 223.2,567.8 229.6,569.2 233.8,568.5 237.4,570.6 241.6,574.9 245.9,579.2 248.0,582.0 251.6,582.7 255.1,584.1 256.5,582.0 261.5,584.8 265.8,585.6 270.0,587.7 274.3,591.2 277.1,594.1 280.7,596.2 279.3,599.0 275.0,600.5 270.0,601.2 266.5,604.0 268.6,610.4 270.7,615.4 270.0,622.5 270.7,627.4 267.2,629.6 263.6,631.7 262.9,637.4 264.3,643.0 259.4,645.9 253.7,648.7 247.3,650.9 243.8,651.6 242.3,647.3 239.5,643.8 238.1,638.1 235.2,633.1 232.4,628.1 230.3,622.5 232.4,615.4 228.9,618.2 226.0,617.5 223.2,613.9 218.9,615.4 216.1,618.2 218.9,621.8 219.6,625.3 216.1,628.1 209.7,628.9 211.1,626.0 208.3,623.9 206.8,619.6 202.6,616.8 198.3,620.3 193.4,622.5 189.8,621.0 187.0,616.1 183.4,614.7 184.1,610.4 190.5,609.0 191.9,602.6 193.4,592.7 191.9,587.0 189.1,583.4" fill="#e9cfa8" stroke="#62666a" stroke-width="1" stroke-linejoin="round"/>
<polygon points="219.6,589.8 224.6,591.9 229.6,593.4 229.6,596.9 226.0,596.9 222.5,594.1" fill="#a9cfe4" stroke="#62666a" stroke-width="1" stroke-linejoin="round"/>
<polygon points="167.8,637.4 174.2,636.0 181.3,633.8 183.4,629.6 188.4,625.3 193.4,622.5 198.3,620.3 201.9,616.8 206.8,619.6 208.3,623.9 211.1,626.0 209.7,628.9 216.1,628.1 219.6,625.3 218.9,621.8 216.1,618.2 218.9,615.4 223.2,613.9 226.0,617.5 228.9,618.2 232.4,615.4 230.3,622.5 232.4,628.1 235.2,633.1 238.1,638.1 237.4,644.2 233.8,647.0 229.6,647.7 226.7,651.3 222.5,653.4 223.9,657.7 221.0,661.2 217.5,666.2 213.2,669.0 211.1,672.6 209.0,670.5 205.4,666.9 201.2,670.5 196.2,674.0 190.5,676.1 185.6,679.7 182.0,683.9 176.3,683.2 173.5,675.4 170.6,668.3 167.1,664.1 169.2,658.4 172.1,652.7 170.6,644.2 167.8,637.8" fill="#6ba2cf" stroke="#62666a" stroke-width="1" stroke-linejoin="round"/>
<polygon points="176.3,683.2 182.0,683.9 185.6,679.7 190.5,676.1 196.2,674.0 201.2,670.5 205.4,666.9 209.0,670.5 211.1,672.6 211.8,676.1 209.0,679.7 210.4,684.7 207.6,689.6 205.4,693.9 209.0,696.0 214.7,696.0 216.8,700.3 218.2,705.2 217.5,709.5 219.6,713.0 218.2,718.0 217.5,723.0 214.7,727.2 209.7,726.5 202.6,724.4 196.9,722.3 195.5,716.6 193.4,710.2 189.8,707.4 184.8,709.5 177.7,710.2 179.2,704.5 175.6,699.6 172.1,693.9 172.8,688.2" fill="#b0d0dd" stroke="#62666a" stroke-width="1" stroke-linejoin="round"/>
<polygon points="177.7,710.9 184.8,709.5 189.8,707.4 193.4,710.2 195.5,716.6 196.2,722.3 191.9,723.0 187.7,721.6 183.4,718.0 180.6,713.8" fill="#d8d6cb" stroke="#62666a" stroke-width="1" stroke-linejoin="round"/>
<polygon points="211.1,672.6 213.2,669.0 217.5,666.2 221.0,661.2 223.9,657.7 222.5,653.4 226.7,651.3 229.6,647.7 233.8,647.0 237.4,644.2 241.6,643.5 243.0,648.5 243.8,652.0 248.7,650.6 251.6,654.8 253.7,658.4 250.9,664.1 250.1,669.0 248.0,673.3 250.9,678.3 247.3,681.8 243.8,684.7 240.9,688.9 237.4,692.5 231.0,693.2 230.3,698.1 232.4,703.8 231.0,708.8 228.9,713.0 226.7,714.5 223.9,710.9 220.3,708.8 218.2,705.2 216.8,700.3 214.7,696.0 209.0,696.0 205.4,693.9 207.6,689.6 210.4,684.7 209.0,679.7 211.8,676.1" fill="#a9cfe0" stroke="#62666a" stroke-width="1" stroke-linejoin="round"/>
<polygon points="248.7,650.6 253.7,648.5 259.4,645.6 263.6,643.5 267.9,646.3 271.4,649.9 276.4,652.0 279.3,657.0 283.5,660.5 288.5,662.7 294.9,664.8 297.0,661.2 299.8,660.5 303.4,664.8 299.8,669.0 297.0,672.6 293.4,676.1 289.2,679.0 288.5,683.2 283.5,682.5 279.3,680.4 276.4,681.1 275.7,685.4 272.2,684.7 267.2,685.4 264.3,688.2 261.5,684.7 258.0,681.8 253.7,679.0 250.9,678.3 248.0,673.3 250.1,669.0 250.9,664.1 253.7,658.4 251.6,654.8" fill="#c8d4d6" stroke="#62666a" stroke-width="1" stroke-linejoin="round"/>
<polygon points="265.9,603.7 270.4,601.7 276.9,601.7 280.8,598.5 284.1,597.8 288.0,600.4 292.5,601.7 295.8,603.7 295.1,609.5 294.5,614.1 297.1,618.0 296.4,624.5 298.4,628.4 303.0,631.0 307.5,632.3 312.1,634.3 314.0,636.9 314.0,642.7 306.9,642.7 300.3,644.0 295.1,646.0 294.5,649.9 294.5,655.1 296.4,660.9 295.1,664.8 290.6,662.9 286.0,660.9 281.5,659.6 278.9,656.4 279.5,652.5 275.0,650.5 271.1,648.6 268.5,644.7 265.2,642.1 262.6,637.5 263.3,631.7 267.2,629.7 270.4,628.4 271.1,622.5 269.8,618.0 269.1,612.1 267.2,607.6" fill="#d2d6d1" stroke="#62666a" stroke-width="1" stroke-linejoin="round"/>
<polygon points="295.1,646.0 300.3,644.0 306.9,642.7 314.0,642.7 315.3,648.6 318.6,650.5 323.1,649.9 327.7,651.8 331.6,650.5 334.8,647.3 339.4,646.6 344.6,646.0 348.5,647.3 351.8,651.2 352.4,656.4 351.1,662.9 349.2,668.1 346.6,668.7 344.6,664.8 341.3,662.9 338.1,664.2 338.7,666.8 334.2,668.7 329.6,671.3 325.1,673.3 319.9,675.9 315.3,678.5 310.8,681.8 306.2,683.1 301.7,684.4 298.4,687.6 297.1,690.2 294.5,686.3 291.2,682.4 289.3,679.2 291.9,675.9 295.8,673.3 297.1,669.4 301.7,666.8 303.0,664.2 299.7,661.6 296.4,660.9 294.5,655.1 294.5,649.9" fill="#d2d6d1" stroke="#62666a" stroke-width="1" stroke-linejoin="round"/>
<polygon points="218.6,709.9 221.7,708.6 224.2,710.5 226.6,713.6 229.1,711.7 231.6,709.9 232.9,706.8 236.6,704.9 239.1,702.4 243.4,703.0 245.9,705.5 248.4,709.9 252.1,713.0 253.4,718.6 255.8,723.5 258.9,727.9 259.6,733.5 260.2,737.2 256.5,737.8 255.2,741.6 252.1,743.4 249.6,746.5 251.5,751.5 252.7,757.1 252.1,763.3 252.1,768.3 248.4,769.5 243.4,770.1 238.4,768.3 234.1,765.8 231.0,764.5 228.5,767.6 224.8,766.4 221.1,764.5 218.0,767.0 213.0,769.5 208.6,771.4 203.7,771.4 200.6,769.5 199.9,764.5 201.2,757.1 203.0,749.6 205.5,739.7 209.3,733.5 213.0,727.3 216.7,722.3 219.2,714.8" fill="#9ccbe6" stroke="#62666a" stroke-width="1" stroke-linejoin="round"/>
<polygon points="231.0,708.8 232.4,703.8 230.3,698.1 231.0,693.2 237.4,692.5 240.9,688.9 243.8,684.7 247.3,681.8 250.9,678.3 253.7,679.0 258.0,681.8 261.5,684.7 264.3,688.2 267.2,685.4 272.2,684.7 275.7,685.4 276.4,681.1 279.3,680.4 283.5,682.5 288.5,683.2 293.4,686.1 296.3,689.6 298.1,692.5 300.6,697.5 299.9,703.0 303.0,708.6 306.1,713.6 311.1,718.0 316.7,722.9 321.1,727.9 325.4,732.2 327.9,736.6 326.6,740.3 322.3,741.6 319.2,745.9 314.2,749.6 309.3,752.7 306.8,755.2 308.6,759.6 311.1,763.9 313.0,767.6 312.4,772.6 309.9,773.2 307.4,769.5 303.7,768.3 299.3,767.6 295.6,767.6 293.1,769.5 288.1,770.7 283.2,772.0 279.4,774.5 275.7,775.7 271.4,775.7 268.3,773.2 264.5,772.0 260.8,772.6 258.3,775.7 255.2,778.8 253.4,775.7 249.6,772.6 245.3,770.7 243.4,770.1 248.4,769.5 252.1,768.3 252.1,763.3 252.7,757.1 251.5,751.5 249.6,746.5 252.1,743.4 255.2,741.6 256.5,737.8 260.2,737.2 259.6,733.5 258.9,727.9 255.8,723.5 253.4,718.6 252.1,713.0 248.4,709.9 245.9,705.5 243.4,703.0 239.1,702.4 236.6,704.9 232.9,706.8 231.6,709.9" fill="#9ccbe6" stroke="#62666a" stroke-width="1" stroke-linejoin="round"/>
</g>
<g font-family='"Liberation Sans", Arial, sans-serif'>
<text x="-12.8" y="614.3" font-size="13.5" textLength="66" lengthAdjust="spacingAndGlyphs" fill="#989898" stroke="#fff" stroke-width="3" stroke-opacity="0.85" paint-order="stroke" stroke-linejoin="round">Vereinigtes</text>
<text x="-9" y="629.8" font-size="13.5" textLength="61.6" lengthAdjust="spacingAndGlyphs" fill="#989898" stroke="#fff" stroke-width="3" stroke-opacity="0.85" paint-order="stroke" stroke-linejoin="round">Königreich</text>
<text x="111.7" y="626.2" font-size="13.5" textLength="73.6" lengthAdjust="spacingAndGlyphs" fill="#989898" stroke="#fff" stroke-width="3" stroke-opacity="0.85" paint-order="stroke" stroke-linejoin="round">Niederlande</text>
<text x="114.4" y="675" font-size="13.5" textLength="45.5" lengthAdjust="spacingAndGlyphs" fill="#989898" stroke="#fff" stroke-width="3" stroke-opacity="0.85" paint-order="stroke" stroke-linejoin="round">Belgien</text>
<text x="428.2" y="617.4" font-size="16" textLength="40.1" lengthAdjust="spacingAndGlyphs" fill="#989898" stroke="#fff" stroke-width="3" stroke-opacity="0.85" paint-order="stroke" stroke-linejoin="round">Polen</text>
<text x="320" y="693" font-size="13.5" textLength="77.6" lengthAdjust="spacingAndGlyphs" fill="#989898" stroke="#fff" stroke-width="3" stroke-opacity="0.85" paint-order="stroke" stroke-linejoin="round">Tschechische</text>
<text x="331.4" y="708.5" font-size="13.5" textLength="53" lengthAdjust="spacingAndGlyphs" fill="#989898" stroke="#fff" stroke-width="3" stroke-opacity="0.85" paint-order="stroke" stroke-linejoin="round">Republik</text>
<text x="415.6" y="731.8" font-size="13.5" textLength="54" lengthAdjust="spacingAndGlyphs" fill="#989898" stroke="#fff" stroke-width="3" stroke-opacity="0.85" paint-order="stroke" stroke-linejoin="round">Slowakei</text>
<text x="314.2" y="769.5" font-size="13.5" textLength="62.6" lengthAdjust="spacingAndGlyphs" fill="#989898" stroke="#fff" stroke-width="3" stroke-opacity="0.85" paint-order="stroke" stroke-linejoin="round">Österreich</text>
<text x="184" y="796" font-size="13.5" textLength="50.6" lengthAdjust="spacingAndGlyphs" fill="#989898" stroke="#fff" stroke-width="3" stroke-opacity="0.85" paint-order="stroke" stroke-linejoin="round">Schweiz</text>
<text x="58.6" y="799.8" font-size="16" textLength="79" lengthAdjust="spacingAndGlyphs" fill="#989898" stroke="#fff" stroke-width="3" stroke-opacity="0.85" paint-order="stroke" stroke-linejoin="round">Frankreich</text>
</g>
<rect x="20.7" y="776" width="176.1" height="15.5" fill="#fafafa" fill-opacity="0.96"/>
<text x="24" y="788" font-size="11" fill="#4a4a4a" font-family='"Liberation Sans", Arial, sans-serif'>© 2025 Mapbox © OpenStreetMap</text>
<rect x="398.6" y="769.7" width="97" height="17.6" rx="3" fill="#a2a2a2" fill-opacity="0.85"/>
<text x="406.2" y="783" font-size="12" font-weight="bold" fill="#fff" textLength="82" lengthAdjust="spacingAndGlyphs" font-family='"Liberation Sans", Arial, sans-serif'>112 unknown</text>
</g>
<rect x="18.5" y="514.5" width="483" height="279" fill="none" stroke="#dcdcdc" stroke-width="1"/>
</svg>
<div class="title" style="left:513px;top:525px;letter-spacing:0.5px">Umsatz und Gewinn pro Monat</div>
<div class="abs" style="left:841px;top:519px;width:14px;height:14px;background:#59a14f"></div>
<div class="abs" style="left:841px;top:539px;width:14px;height:14px;background:#4e79a7"></div>
<div class="abs" style="left:860px;top:519px;font-size:12px;line-height:16px;color:#555;letter-spacing:0.4px;-webkit-text-stroke:0.18px #fff">Gewinn</div>
<div class="abs" style="left:860px;top:539px;font-size:12px;line-height:16px;color:#555;letter-spacing:0.4px;-webkit-text-stroke:0.18px #fff">Umsatz</div>
<svg class="abs" style="left:505px;top:560px" width="495" height="240" viewBox="505 560 495 240">
<line x1="511" x2="993" y1="583.5" y2="583.5" stroke="#ececec" stroke-width="1"/>
<line x1="511" x2="993" y1="640.5" y2="640.5" stroke="#ececec" stroke-width="1"/>
<line x1="511" x2="993" y1="696.5" y2="696.5" stroke="#ececec" stroke-width="1"/>
<line x1="511" x2="993" y1="753.5" y2="753.5" stroke="#bdbdbd" stroke-width="1" stroke-dasharray="2,2"/>
<line x1="510" x2="994" y1="763.5" y2="763.5" stroke="#cfcfcf" stroke-width="1"/>
<path d="M510.5,793 V564.5 H993.5 V793" fill="none" stroke="#cfcfcf" stroke-width="1"/>
<line x1="533.5" x2="533.5" y1="764" y2="768" stroke="#e6e6e6" stroke-width="1"/>
<line x1="644.7" x2="644.7" y1="764" y2="768" stroke="#e6e6e6" stroke-width="1"/>
<line x1="755.9" x2="755.9" y1="764" y2="768" stroke="#e6e6e6" stroke-width="1"/>
<line x1="867.1" x2="867.1" y1="764" y2="768" stroke="#e6e6e6" stroke-width="1"/>
<line x1="978.3" x2="978.3" y1="764" y2="768" stroke="#e6e6e6" stroke-width="1"/>
<line x1="533.5" x2="533.5" y1="764" y2="765" stroke="#ededed" stroke-width="1"/>
<line x1="542.8" x2="542.8" y1="764" y2="765" stroke="#ededed" stroke-width="1"/>
<line x1="552.0" x2="552.0" y1="764" y2="765" stroke="#ededed" stroke-width="1"/>
<line x1="561.3" x2="561.3" y1="764" y2="765" stroke="#ededed" stroke-width="1"/>
<line x1="570.6" x2="570.6" y1="764" y2="765" stroke="#ededed" stroke-width="1"/>
<line x1="579.8" x2="579.8" y1="764" y2="765" stroke="#ededed" stroke-width="1"/>
<line x1="589.1" x2="589.1" y1="764" y2="765" stroke="#ededed" stroke-width="1"/>
<line x1="598.4" x2="598.4" y1="764" y2="765" stroke="#ededed" stroke-width="1"/>
<line x1="607.6" x2="607.6" y1="764" y2="765" stroke="#ededed" stroke-width="1"/>
<line x1="616.9" x2="616.9" y1="764" y2="765" stroke="#ededed" stroke-width="1"/>
<line x1="626.2" x2="626.2" y1="764" y2="765" stroke="#ededed" stroke-width="1"/>
<line x1="635.4" x2="635.4" y1="764" y2="765" stroke="#ededed" stroke-width="1"/>
<line x1="644.7" x2="644.7" y1="764" y2="765" stroke="#ededed" stroke-width="1"/>
<line x1="654.0" x2="654.0" y1="764" y2="765" stroke="#ededed" stroke-width="1"/>
<line x1="663.2" x2="663.2" y1="764" y2="765" stroke="#ededed" stroke-width="1"/>
<line x1="672.5" x2="672.5" y1="764" y2="765" stroke="#ededed" stroke-width="1"/>
<line x1="681.8" x2="681.8" y1="764" y2="765" stroke="#ededed" stroke-width="1"/>
<line x1="691.0" x2="691.0" y1="764" y2="765" stroke="#ededed" stroke-width="1"/>
<line x1="700.3" x2="700.3" y1="764" y2="765" stroke="#ededed" stroke-width="1"/>
<line x1="709.6" x2="709.6" y1="764" y2="765" stroke="#ededed" stroke-width="1"/>
<line x1="718.8" x2="718.8" y1="764" y2="765" stroke="#ededed" stroke-width="1"/>
<line x1="728.1" x2="728.1" y1="764" y2="765" stroke="#ededed" stroke-width="1"/>
<line x1="737.4" x2="737.4" y1="764" y2="765" stroke="#ededed" stroke-width="1"/>
<line x1="746.6" x2="746.6" y1="764" y2="765" stroke="#ededed" stroke-width="1"/>
<line x1="755.9" x2="755.9" y1="764" y2="765" stroke="#ededed" stroke-width="1"/>
<line x1="765.2" x2="765.2" y1="764" y2="765" stroke="#ededed" stroke-width="1"/>
<line x1="774.4" x2="774.4" y1="764" y2="765" stroke="#ededed" stroke-width="1"/>
<line x1="783.7" x2="783.7" y1="764" y2="765" stroke="#ededed" stroke-width="1"/>
<line x1="793.0" x2="793.0" y1="764" y2="765" stroke="#ededed" stroke-width="1"/>
<line x1="802.2" x2="802.2" y1="764" y2="765" stroke="#ededed" stroke-width="1"/>
<line x1="811.5" x2="811.5" y1="764" y2="765" stroke="#ededed" stroke-width="1"/>
<line x1="820.8" x2="820.8" y1="764" y2="765" stroke="#ededed" stroke-width="1"/>
<line x1="830.0" x2="830.0" y1="764" y2="765" stroke="#ededed" stroke-width="1"/>
<line x1="839.3" x2="839.3" y1="764" y2="765" stroke="#ededed" stroke-width="1"/>
<line x1="848.6" x2="848.6" y1="764" y2="765" stroke="#ededed" stroke-width="1"/>
<line x1="857.8" x2="857.8" y1="764" y2="765" stroke="#ededed" stroke-width="1"/>
<line x1="867.1" x2="867.1" y1="764" y2="765" stroke="#ededed" stroke-width="1"/>
<line x1="876.4" x2="876.4" y1="764" y2="765" stroke="#ededed" stroke-width="1"/>
<line x1="885.6" x2="885.6" y1="764" y2="765" stroke="#ededed" stroke-width="1"/>
<line x1="894.9" x2="894.9" y1="764" y2="765" stroke="#ededed" stroke-width="1"/>
<line x1="904.2" x2="904.2" y1="764" y2="765" stroke="#ededed" stroke-width="1"/>
<line x1="913.4" x2="913.4" y1="764" y2="765" stroke="#ededed" stroke-width="1"/>
<line x1="922.7" x2="922.7" y1="764" y2="765" stroke="#ededed" stroke-width="1"/>
<line x1="932.0" x2="932.0" y1="764" y2="765" stroke="#ededed" stroke-width="1"/>
<line x1="941.2" x2="941.2" y1="764" y2="765" stroke="#ededed" stroke-width="1"/>
<line x1="950.5" x2="950.5" y1="764" y2="765" stroke="#ededed" stroke-width="1"/>
<line x1="959.8" x2="959.8" y1="764" y2="765" stroke="#ededed" stroke-width="1"/>
<line x1="969.0" x2="969.0" y1="764" y2="765" stroke="#ededed" stroke-width="1"/>
<polyline points="533.5,732.0 542.8,728.0 552.1,729.5 561.3,722.9 570.6,718.0 579.9,692.5 589.2,732.5 598.5,688.8 607.8,671.8 617.0,731.0 626.3,684.4 635.6,665.9 644.9,712.5 654.2,726.6 663.5,699.2 672.7,714.7 682.0,708.8 691.3,674.1 700.6,698.1 709.9,642.3 719.2,669.8 728.4,707.5 737.7,679.2 747.0,662.0 756.3,692.9 765.6,689.5 774.9,714.0 784.1,714.0 793.4,693.8 802.7,640.6 812.0,686.0 821.3,665.5 830.6,660.3 839.8,709.7 849.1,646.2 858.4,660.9 867.7,679.8 877.0,688.8 886.3,695.2 895.5,674.3 904.8,695.9 914.1,628.4 923.4,685.7 932.7,574.9 942.0,615.9 951.2,680.3 960.5,618.3 969.8,613.5" fill="none" stroke="#4e79a7" stroke-width="3" stroke-linejoin="round" stroke-linecap="round"/>
<polyline points="533.5,753.2 542.8,752.4 552.1,749.5 561.3,749.5 570.6,751.0 579.9,745.0 589.2,751.0 598.5,745.0 607.8,738.4 617.0,750.7 626.3,746.8 635.6,741.0 644.9,750.2 654.2,745.8 663.5,748.7 672.7,751.7 682.0,747.0 691.3,741.2 700.6,743.5 709.9,733.7 719.2,743.9 728.4,746.6 737.7,750.9 747.0,742.3 756.3,742.1 765.6,743.2 774.9,749.5 784.1,747.3 793.4,746.1 802.7,742.3 812.0,744.7 821.3,744.7 830.6,742.7 839.8,745.3 849.1,737.2 858.4,741.8 867.7,741.8 877.0,747.2 886.3,745.4 895.5,743.2 904.8,745.4 914.1,740.9 923.4,748.0 932.7,730.0 942.0,731.9 951.2,740.1 960.5,739.4 969.8,738.7" fill="none" stroke="#59a14f" stroke-width="3" stroke-linejoin="round" stroke-linecap="round"/>
<g font-size="12" fill="#777" font-family='"Liberation Sans", Arial, sans-serif'>
<text x="533.5" y="783" text-anchor="middle" textLength="28.5">2018</text>
<text x="644.7" y="783" text-anchor="middle" textLength="28.5">2019</text>
<text x="755.9" y="783" text-anchor="middle" textLength="28.5">2020</text>
<text x="867.1" y="783" text-anchor="middle" textLength="28.5">2021</text>
<text x="991" y="783" text-anchor="end" textLength="28.5">2022</text>
</g></svg>
<div class="abs" style="left:419px;top:236px;width:954px;height:258px;border:2px solid #666"></div>
<div class="abs" style="left:424px;top:360px;font-size:12px;line-height:16px;color:#a0a0a0;letter-spacing:0.5px">Notizen</div>
<div class="abs" style="left:1375px;top:236px;width:21px;height:42px;background:#666;border-radius:0 3px 3px 0"></div>
<svg class="abs" style="left:1375px;top:236px" width="21" height="42" viewBox="0 0 21 42"><path d="M5.3,5.3 L15.1,15.1 M15.1,5.3 L5.3,15.1" stroke="#fff" stroke-width="1.3" fill="none"/><polygon points="6.5,28.5 14.3,28.5 10.4,33" fill="#fff"/></svg>
<div class="abs" style="left:873px;top:225px;width:50px;height:13px;background:#666;border-radius:3px 3px 0 0"></div>
<div class="abs" style="left:878px;top:228px;width:40px;height:1px;background:#fff"></div>
<div class="abs" style="left:878px;top:232px;width:40px;height:1px;background:#fff"></div>
</body></html>
